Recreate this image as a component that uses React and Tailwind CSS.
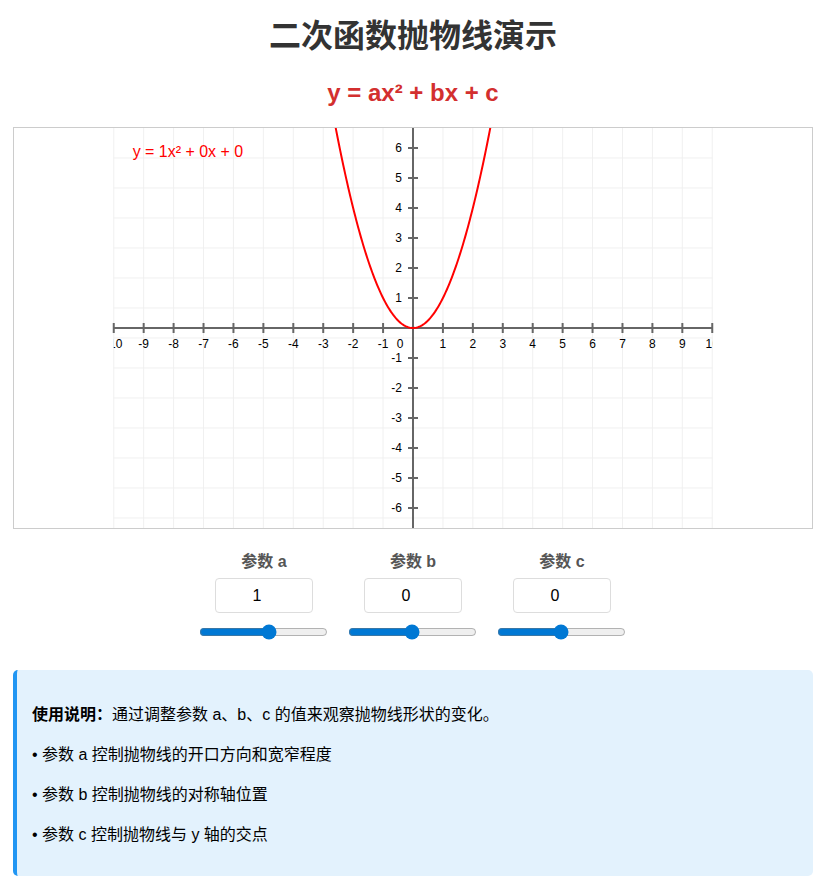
import { useState } from "react";

const W = 800;
const H = 400;
const OX = 400;
const OY = 200;
const S = 30;

function Graph({ a, b, c }) {
  const vLines = [];
  for (let i = -10; i <= 10; i++) vLines.push(OX + i * S);
  const hLines = [];
  for (let y = 30; y < H; y += 30) hLines.push(y);

  const pts = [];
  for (let px = 100; px <= 700; px += 1) {
    const x = (px - OX) / S;
    const y = a * x * x + b * x + c;
    pts.push(`${px},${(OY - y * S).toFixed(2)}`);
  }

  const xTicks = [];
  for (let i = -10; i <= 10; i++) if (i !== 0) xTicks.push(i);
  const yTicks = [];
  for (let i = -6; i <= 6; i++) if (i !== 0) yTicks.push(i);

  return (
    <svg
      viewBox={`0 0 ${W} ${H}`}
      width="798"
      height="400"
      preserveAspectRatio="none"
      className="block"
      style={{ fontFamily: '"Liberation Sans", Arial, sans-serif' }}
    >
      <defs>
        <clipPath id="plot">
          <rect x="100" y="0" width="600" height="400" />
        </clipPath>
      </defs>
      <g stroke="#f0f0f0" strokeWidth="1">
        {vLines.map((x) => (
          <line key={x} x1={x} y1="0" x2={x} y2={H} />
        ))}
        {hLines.map((y) => (
          <line key={y} x1="100" y1={y} x2="700" y2={y} />
        ))}
      </g>

      <g stroke="#666" strokeWidth="2">
        <line x1="100" y1={OY} x2="700" y2={OY} />
        <line x1={OX} y1="0" x2={OX} y2={H} />
        {vLines.map((x) => (
          <line key={x} x1={x} y1={OY - 5} x2={x} y2={OY + 5} />
        ))}
        {yTicks.map((i) => (
          <line key={i} x1={OX - 5} y1={OY - i * S} x2={OX + 5} y2={OY - i * S} />
        ))}
      </g>

      <g clipPath="url(#plot)" fontSize="12" fill="#000">
        {xTicks.map((i) => (
          <text key={i} x={OX + i * S} y={OY + 20} textAnchor="middle">
            {i}
          </text>
        ))}
        <text x={OX - 13} y={OY + 20} textAnchor="middle">
          0
        </text>
        {yTicks.map((i) => (
          <text key={i} x={OX - 11} y={OY - i * S + 4} textAnchor="end">
            {i}
          </text>
        ))}
      </g>

      <polyline
        points={pts.join(" ")}
        fill="none"
        stroke="#ff0000"
        strokeWidth="2"
        clipPath="url(#plot)"
      />

      <text x="119" y="29" fontSize="16" fill="#ff0000">
        y = {a}x² + {b}x + {c}
      </text>
    </svg>
  );
}

function Param({ label, value, onChange }) {
  return (
    <div className="flex w-[129px] flex-col items-center">
      <label className="text-base font-bold leading-6 text-[#555]">{label}</label>
      <input
        type="number"
        value={value}
        onChange={(e) => onChange(Number(e.target.value))}
        className="mt-1 h-[35px] w-[98px] rounded border border-[#ddd] bg-white pr-[14px] text-center text-base text-black outline-none [appearance:textfield] [&::-webkit-inner-spin-button]:appearance-none"
      />
      <input
        type="range"
        min="-10"
        max="10"
        step="0.1"
        value={value}
        onChange={(e) => onChange(Number(e.target.value))}
        className="mt-[11px] -ml-[2px] w-[129px] accent-[#0078d4]"
      />
    </div>
  );
}

export default function App() {
  const [a, setA] = useState(1);
  const [b, setB] = useState(0);
  const [c, setC] = useState(0);

  return (
    <div
      className="min-h-screen bg-white text-black"
      style={{ fontFamily: '"Liberation Sans", Arial, "Noto Sans CJK SC", sans-serif' }}
    >
      <div className="mx-auto w-[800px] pt-[17px]">
        <h1 className="text-center text-[32px] font-bold leading-[38px] text-[#333]">
          二次函数抛物线演示
        </h1>
        <h2 className="mt-[23px] text-center text-2xl font-bold leading-[29px] text-[#d32f2f]">
          y = ax² + bx + c
        </h2>

        <div className="mt-5 border border-[#ccc] bg-white">
          <Graph a={a} b={b} c={c} />
        </div>

        <div className="mt-[21px] flex justify-center gap-5">
          <Param label="参数 a" value={a} onChange={setA} />
          <Param label="参数 b" value={b} onChange={setB} />
          <Param label="参数 c" value={c} onChange={setC} />
        </div>

        <div className="mt-[30px] rounded-[5px] border-l-4 border-[#2196f3] bg-[#e3f2fd] px-[15px] pt-[17px] pb-[13px] text-base leading-6 text-black">
          <p className="my-4">
            <strong>使用说明：</strong>通过调整参数 a、b、c 的值来观察抛物线形状的变化。
          </p>
          <p className="my-4">• 参数 a 控制抛物线的开口方向和宽窄程度</p>
          <p className="my-4">• 参数 b 控制抛物线的对称轴位置</p>
          <p className="my-4">• 参数 c 控制抛物线与 y 轴的交点</p>
        </div>
      </div>
    </div>
  );
}
